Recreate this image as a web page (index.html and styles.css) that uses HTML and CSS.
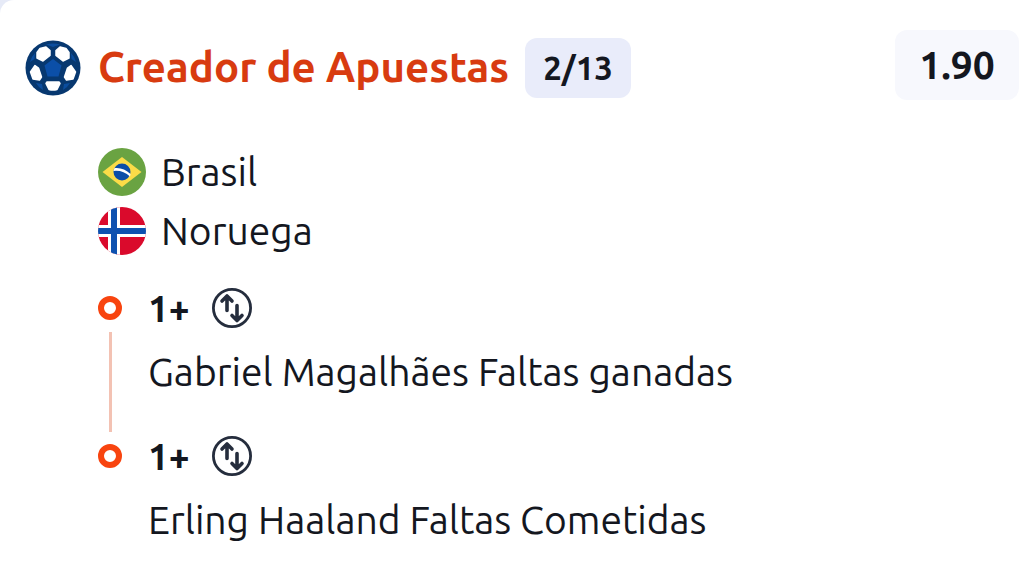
FILE: index.html
```html
<!DOCTYPE html>
<html lang="es">
<head>
<meta charset="utf-8">
<meta name="viewport" content="width=device-width, initial-scale=1">
<title>Creador de Apuestas</title>
<link rel="stylesheet" href="styles.css">
</head>
<body>
<svg width="0" height="0" class="sprite" aria-hidden="true">
  <symbol id="swap" viewBox="0 0 40 40">
    <g fill="none" stroke="#252d3d" stroke-linecap="round" stroke-linejoin="round">
      <circle cx="20" cy="20" r="18.6" stroke-width="2.8"/>
      <path d="M15 22.500V9M10 13l5-5 5 5M25 17.500V31M20 27.500l5 5 5-5" stroke-width="3.600"/>
    </g>
  </symbol>
</svg>
<main class="card">
  <header class="header">
    <svg class="ball" viewBox="0 0 56 56" aria-hidden="true">
      <circle cx="28" cy="28" r="27.500" fill="#073870"/>
      <path d="M21 4.500q7-2 14 0l-7 2.500zM5 22q1-5 5-9l-.500 6zM51 22q-1-5-5-9l.500 6zM11 43l6 1 1 6q-5-3-7-7zM45 43l-6 1-1 6q5-3 7-7z" fill="#0b4d9e"/>
      <path d="M28 19l8.500 6.500-3 11H22.500l-3-11z" fill="#0b4fa8"/>
      <g fill="#fff" stroke="#fff" stroke-width="1.500" stroke-linejoin="round">
        <path d="M15 8.500l6-1.500 4 3.500v5l-7 5.500-6-3v-5.500z"/>
        <path d="M41 8.500l-6-1.500-4 3.500v5l7 5.500 6-3v-5.500z"/>
        <path d="M10 25.500l3.500 2.500 3 9-2 3-6.500-1-2.500-7z"/>
        <path d="M46 25.500l-3.500 2.500-3 9 2 3 6.500-1 2.500-7z"/>
        <path d="M22 42h12l1 1.500-3 6q-4 1-8 0l-3-6z"/>
      </g>
    </svg>
    <h1 class="title">Creador de Apuestas</h1>
    <span class="count">2/13</span>
    <span class="odds">1.90</span>
  </header>
  <div class="content">
    <ul class="teams">
      <li class="team">
        <svg class="flag" viewBox="0 0 48 48" aria-hidden="true">
          <circle cx="24" cy="24" r="24" fill="#6aa342"/>
          <path d="M24 9l19.500 15L24 39 4.500 24z" fill="#fbdc48"/>
          <circle cx="24" cy="24" r="8.500" fill="#0b4ea8"/>
          <path d="M16.500 20q9-1 16 6l-.500 2.500q-7-6.500-16.500-5.500z" fill="#fff"/>
        </svg>
        Brasil
      </li>
      <li class="team">
        <svg class="flag" viewBox="0 0 48 48" aria-hidden="true">
          <clipPath id="round"><circle cx="24" cy="24" r="24"/></clipPath>
          <g clip-path="url(#round)">
            <path d="M0 0h48v48H0z" fill="#da0a2c"/>
            <path d="M10 0h12v48H10zM0 18h48v12H0z" fill="#fff"/>
            <path d="M13 0h6v48h-6zM0 21h48v6H0z" fill="#0d51b0"/>
          </g>
        </svg>
        Noruega
      </li>
    </ul>
    <ol class="picks">
      <li class="pick">
        <div class="track"><span class="ring"></span><span class="line"></span></div>
        <div class="detail">
          <div class="mark"><strong>1+</strong><svg class="swap" aria-hidden="true"><use href="#swap"/></svg></div>
          <p class="name">Gabriel Magalhães Faltas ganadas</p>
        </div>
      </li>
      <li class="pick">
        <div class="track"><span class="ring"></span></div>
        <div class="detail">
          <div class="mark"><strong>1+</strong><svg class="swap" aria-hidden="true"><use href="#swap"/></svg></div>
          <p class="name">Erling Haaland Faltas Cometidas</p>
        </div>
      </li>
    </ol>
  </div>
</main>
</body>
</html>
```
FILE: styles.css
```css
* { box-sizing: border-box; }
body {
  margin: 0;
  background: #e6eaf7;
  color: #14171f;
  font-family: Ubuntu, "Noto Sans", sans-serif;
  font-size: 39px;
}
.sprite { position: absolute; }
.card {
  min-height: 100vh;
  padding: 30px 10px 20px 25px;
  border-top-left-radius: 14px;
  background: #fff;
}
.header { display: flex; align-items: center; height: 70px; }
.ball { width: 56px; height: 56px; flex: none; margin: 6px 17px 0 0; }
.title {
  margin: 4px 16px 0 0;
  color: #d83b10;
  font-size: 42px;
  line-height: 60px;
  font-weight: 700;
}
.count, .odds { font-weight: 700; border-radius: 12px; text-align: center; }
.count {
  min-width: 106px;
  margin-top: 6px;
  background: #e9ecfa;
  font-size: 33px;
  line-height: 60px;
}
.odds {
  min-width: 124px;
  margin-left: auto;
  background: #f7f8fd;
  font-size: 39px;
  line-height: 70px;
}
.content { padding: 42px 0 0 73px; }
.teams, .picks { margin: 0; padding: 0; list-style: none; }
.team { display: flex; align-items: center; gap: 15px; height: 59px; }
.flag { width: 48px; height: 48px; }
.picks { padding-top: 24px; }
.pick { display: flex; gap: 26px; }
.track {
  display: flex;
  flex-direction: column;
  align-items: center;
  gap: 12px;
  padding-top: 12px;
}
.ring { width: 24px; height: 24px; border: 6px solid #f8440f; border-radius: 50%; }
.line { flex: 1; width: 3px; background: #f3c2b3; }
.detail { height: 148px; }
.mark { display: flex; align-items: center; gap: 22px; height: 48px; font-size: 37px; }
.swap { width: 40px; height: 40px; }
.name { margin: 10px 0 0; line-height: 60px; }
```
